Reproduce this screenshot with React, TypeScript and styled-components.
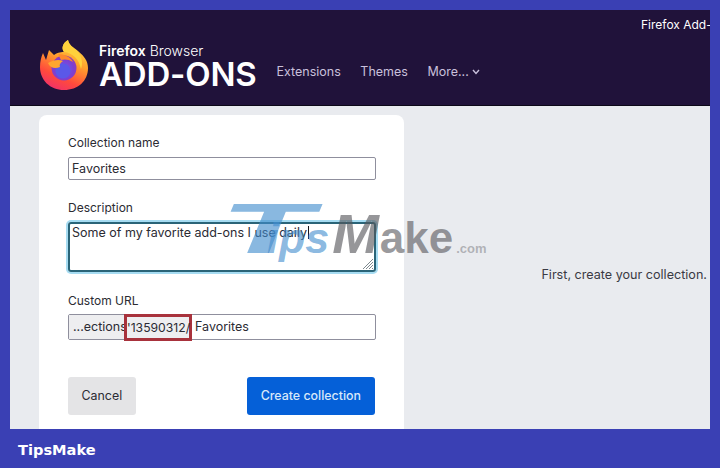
import React from 'react'
import styled, { createGlobalStyle } from 'styled-components'

const Logo = () => (
    <LogoSvg width="50" height="52" viewBox="0 0 50 52">
        <defs>
            <linearGradient id="flame" x1="0.75" y1="0" x2="0.3" y2="1">
                <stop offset="0" stopColor="#ffe14a" />
                <stop offset="0.4" stopColor="#ffa02c" />
                <stop offset="0.75" stopColor="#ff4a3c" />
                <stop offset="1" stopColor="#f0306a" />
            </linearGradient>
            <radialGradient id="globe" cx="0.5" cy="0.55" r="0.6">
                <stop offset="0" stopColor="#6a5cf0" />
                <stop offset="0.65" stopColor="#7d3fd0" />
                <stop offset="1" stopColor="#a03aa8" />
            </radialGradient>
        </defs>
        <path
            d="M25 51C11 51 1 41 1 28C1 23 2 18 4 14L7 21L10 11L15 16C19 13 23 13 25 13C22 9 24 4 29 1C30 6 34 8 39 12C45 17 49 22 49 29C49 42 39 51 25 51Z"
            fill="url(#flame)"
        />
        <path d="M29 1C30 7 35 9 39 13C43 18 44 24 42 30C40 20 34 14 25 13C22 9 24 4 29 1Z" fill="#ffd23c" />
        <circle cx="25" cy="29" r="12.5" fill="url(#globe)" />
        <circle cx="24" cy="32" r="7.5" fill="#5a58e8" />
        <path d="M9 24C14 21 20 20 24 22C21 24 20 26 21 28C16 30 11 29 9 24Z" fill="#ffa62e" />
        <path d="M19 15C25 15 32 18 34 23C30 20 25 20 22 21Z" fill="#ff8a2c" />
    </LogoSvg>
)

const Chevron = () => (
    <svg width="8" height="6" viewBox="0 0 8 6" fill="none" stroke="#c9c0dc" strokeWidth="1.4">
        <path d="M1 1L4 4.5L7 1" />
    </svg>
)

const App = () => {
    return (
        <>
            <GlobalStyle />
            <Screen>
                <Header>
                    <TopBar>
                        <TopLink>Firefox Add-ons</TopLink>
                    </TopBar>
                    <HeaderWrap>
                        <Logo />
                        <Brand>
                            <BrandTop>
                                <b>Firefox</b> Browser
                            </BrandTop>
                            <BrandName>ADD-ONS</BrandName>
                        </Brand>
                        <Nav>
                            <NavItem>Extensions</NavItem>
                            <NavItem>Themes</NavItem>
                            <NavItem>
                                More... <Chevron />
                            </NavItem>
                        </Nav>
                    </HeaderWrap>
                </Header>
                <Main>
                    <Card>
                        <Label>Collection name</Label>
                        <Field>Favorites</Field>
                        <Label>Description</Label>
                        <TextArea>
                            <span>Some of my favorite add-ons I use daily</span>
                            <Caret />
                            <Grip width="12" height="12" viewBox="0 0 12 12" stroke="#5d6b72" strokeWidth="0.8">
                                <path d="M11 1L1 11M11 4L4 11M11 7L7 11M11 10L10 11" />
                            </Grip>
                        </TextArea>
                        <Label>Custom URL</Label>
                        <UrlRow>
                            <UrlPrefix>...ections</UrlPrefix>
                            <UrlId>'13590312/</UrlId>
                            <UrlSlug>Favorites</UrlSlug>
                        </UrlRow>
                        <Actions>
                            <Button>Cancel</Button>
                            <Button $primary>Create collection</Button>
                        </Actions>
                    </Card>
                    <Hint>First, create your collection.</Hint>
                </Main>
            </Screen>
            <Footer>TipsMake</Footer>
            <Watermark>
                <WatermarkT>T</WatermarkT>
                <WatermarkIps>ips</WatermarkIps>
                <WatermarkM>M</WatermarkM>
                <WatermarkAke>ake</WatermarkAke>
                <WatermarkCom>.com</WatermarkCom>
            </Watermark>
        </>
    )
}

export default App

const GlobalStyle = createGlobalStyle`
    html, body {
        margin: 0;
        background: #3a40b4;
        font-family: Inter, "Liberation Sans", sans-serif;
    }
    #root {
        position: relative;
        width: 720px;
        height: 468px;
        overflow: hidden;
        padding-top: 10px;
        box-sizing: border-box;
    }
`

const Screen = styled.div`
    width: 700px;
    height: 419px;
    margin-left: 10px;
    background: #e9ebef;
    overflow: hidden;
`

const Header = styled.div`
    height: 96px;
    background: #20123a;
    border-bottom: 1px solid #0c0818;
    box-sizing: border-box;
`

const TopBar = styled.div`
    height: 30px;
    padding: 7px 0 0 631px;
    box-sizing: border-box;
    overflow: hidden;
`

const TopLink = styled.div`
    color: #fff;
    font-size: 12px;
    line-height: 15px;
    white-space: nowrap;
`

const HeaderWrap = styled.div`
    display: flex;
    align-items: center;
    padding: 1px 0 0 30px;
`

const LogoSvg = styled.svg`
    margin: -2px 0 0 -1px;
`

const Brand = styled.div`
    margin-left: 10px;
    color: #fff;
`

const BrandTop = styled.div`
    font-size: 14px;
    line-height: 15px;
    font-weight: 300;
    b {
        font-weight: 600;
    }
`

const BrandName = styled.div`
    font-size: 33px;
    line-height: 32px;
    font-weight: 600;
    letter-spacing: -0.2px;
`

const Nav = styled.div`
    display: flex;
    gap: 19.5px;
    margin: 12px 0 0 20px;
`

const NavItem = styled.div`
    display: flex;
    align-items: center;
    gap: 3px;
    color: #c9c0dc;
    font-size: 12.5px;
    line-height: 16px;
`

const Main = styled.div`
    display: flex;
    align-items: flex-start;
    padding: 9px 3px 0 29px;
`

const Card = styled.div`
    width: 365px;
    height: 330px;
    flex: none;
    padding: 21px 28px 0 29px;
    box-sizing: border-box;
    background: #fff;
    border-radius: 8px 8px 0 0;
`

const Label = styled.div`
    color: #2b2b33;
    font-size: 12px;
    line-height: 14px;
    margin-bottom: 7px;
`

const Field = styled.div`
    height: 23px;
    margin-bottom: 21px;
    padding-left: 3px;
    box-sizing: border-box;
    border: 1px solid #8f8f9d;
    border-radius: 2px;
    color: #2b2b33;
    font-size: 12.5px;
    line-height: 21px;
`

const TextArea = styled.div`
    position: relative;
    height: 50px;
    margin-bottom: 22px;
    padding: 1px 2px 0;
    box-sizing: border-box;
    border: 2px solid #2a6478;
    border-radius: 3px;
    box-shadow: 0 0 0 2px #a6dcf2;
    color: #2b2b33;
    font-size: 12.5px;
    line-height: 15px;
`

const Caret = styled.i`
    display: inline-block;
    width: 1px;
    height: 13px;
    margin-left: 1px;
    vertical-align: -2px;
    background: #15141a;
`

const Grip = styled.svg`
    position: absolute;
    right: 0;
    bottom: 0;
`

const UrlRow = styled.div`
    display: flex;
    height: 26px;
    margin-top: -1px;
    box-sizing: border-box;
    border: 1px solid #8f8f9d;
    border-radius: 2px;
    color: #2b2b33;
    font-size: 12.5px;
    line-height: 24px;
`

const UrlPrefix = styled.div`
    width: 55px;
    padding-left: 4px;
    box-sizing: border-box;
    background: #eeeef0;
    white-space: nowrap;
    overflow: hidden;
`

const UrlId = styled.div`
    width: 68px;
    height: 27px;
    margin-top: -1px;
    box-sizing: border-box;
    background: #eeeef0;
    border: 3px solid #a8323c;
    font-size: 12.2px;
    line-height: 21px;
    white-space: nowrap;
`

const UrlSlug = styled.div`
    padding-left: 3px;
`

const Actions = styled.div`
    display: flex;
    justify-content: space-between;
    margin-top: 37px;
    padding-right: 1px;
`

const Button = styled.div<{ $primary?: boolean }>`
    height: 38px;
    padding: 0 ${(p) => (p.$primary ? '14px' : '13.5px')};
    border-radius: 3px;
    background: ${(p) => (p.$primary ? '#0560d8' : '#e4e4e6')};
    color: ${(p) => (p.$primary ? '#d8e8fa' : '#2b2b33')};
    font-size: 12.4px;
    font-weight: ${(p) => (p.$primary ? 500 : 400)};
    line-height: 38px;
`

const Hint = styled.div`
    margin: 152px 0 0 auto;
    color: #3a3a44;
    font-size: 12.6px;
    line-height: 15px;
    white-space: nowrap;
`

const Footer = styled.div`
    height: 39px;
    padding-left: 18px;
    color: #fff;
    font-family: "DejaVu Sans", sans-serif;
    font-size: 14.6px;
    font-weight: 700;
    line-height: 41px;
`

const Watermark = styled.div`
    position: absolute;
    left: 229px;
    top: 194px;
    display: flex;
    align-items: baseline;
    font-family: "Liberation Sans", sans-serif;
    font-weight: 700;
    font-style: italic;
    line-height: 70px;
    white-space: nowrap;
    pointer-events: none;
`

const WatermarkT = styled.span`
    display: inline-block;
    width: 41px;
    margin-left: -9px;
    margin-right: 6px;
    color: rgba(64, 140, 205, 0.62);
    font-size: 70px;
    transform: scaleX(2.15);
    transform-origin: 0 100%;
`

const WatermarkIps = styled.span`
    margin-right: 3px;
    color: rgba(64, 140, 205, 0.62);
    font-size: 43px;
`

const WatermarkM = styled.span`
    color: rgba(85, 85, 90, 0.62);
    font-size: 56px;
`

const WatermarkAke = styled.span`
    color: rgba(85, 85, 90, 0.6);
    font-size: 44px;
    font-style: normal;
    margin-left: 1px;
`

const WatermarkCom = styled.span`
    margin-left: 3px;
    color: rgba(120, 120, 125, 0.5);
    font-size: 13px;
    font-style: normal;
`
